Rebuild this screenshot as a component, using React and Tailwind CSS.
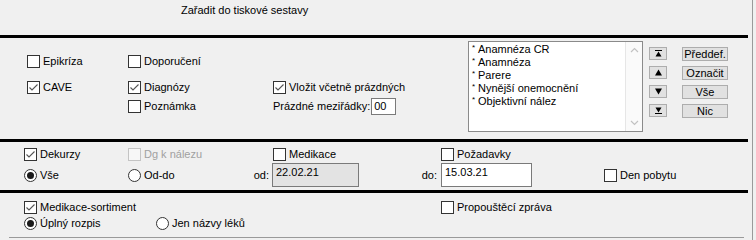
import React from "react";

function Check({ checked, disabled, label }) {
  return (
    <div className="flex items-center gap-[3px] h-[13px] whitespace-nowrap">
      <span
        className={
          disabled
            ? "w-[13px] h-[13px] shrink-0 border border-[#c4c4c4] bg-[#f7f7f7]"
            : "w-[13px] h-[13px] shrink-0 border border-[#333333] bg-white flex items-center justify-center"
        }
      >
        {checked && (
          <svg width="11" height="11" viewBox="0 0 11 11">
            <path d="M1.5 5.5 L4 8 L9.5 2.5" stroke="#555" strokeWidth="1.1" fill="none" />
          </svg>
        )}
      </span>
      <span className={disabled ? "text-[#a0a0a0] leading-[13px]" : "leading-[13px]"}>{label}</span>
    </div>
  );
}

function Radio({ checked, label }) {
  return (
    <div className="flex items-center gap-[3px] h-[13px] whitespace-nowrap">
      <span className="w-[13px] h-[13px] shrink-0 rounded-full border border-[#333333] bg-white flex items-center justify-center">
        {checked && <span className="w-[7px] h-[7px] rounded-full bg-[#1a1a1a]" />}
      </span>
      <span className="leading-[13px]">{label}</span>
    </div>
  );
}

function Btn({ children }) {
  return (
    <div className="w-[46px] h-[14px] border border-[#adadad] bg-[#e1e1e1] flex items-center justify-center leading-[12px]">
      {children}
    </div>
  );
}

function ArrowBtn({ kind }) {
  return (
    <div className="w-[18px] h-[13px] border border-[#adadad] bg-[#e1e1e1] flex items-center justify-center">
      <svg width="7" height="7" viewBox="0 0 7 7">
        {kind === "top" && (
          <>
            <rect x="0" y="0" width="7" height="1" fill="#000" />
            <path d="M0.5 6.5 L3.5 1.5 L6.5 6.5 Z" fill="#000" />
          </>
        )}
        {kind === "up" && <path d="M0 6.5 L3.5 0.5 L7 6.5 Z" fill="#000" />}
        {kind === "down" && <path d="M0 0.5 L3.5 6.5 L7 0.5 Z" fill="#000" />}
        {kind === "bottom" && (
          <>
            <path d="M0.5 0.5 L3.5 5.5 L6.5 0.5 Z" fill="#000" />
            <rect x="0" y="6" width="7" height="1" fill="#000" />
          </>
        )}
      </svg>
    </div>
  );
}

function Item({ children }) {
  return (
    <div className="flex items-start h-[13px] leading-[13px] whitespace-nowrap">
      <span className="text-[8px] leading-[9px] w-[6px]">*</span>
      <span>{children}</span>
    </div>
  );
}

export default function App() {
  return (
    <div className="w-[756px] h-[240px] bg-[#f0f0f0] flex overflow-hidden text-[11px] text-black font-['Liberation_Sans',Arial,sans-serif]">
      <div className="w-[752px] flex flex-col">
        {/* title */}
        <div className="h-[35px] pl-[181px] pt-[4px] leading-[13px]">Zařadit do tiskové sestavy</div>
        <div className="w-[748px] h-[3px] bg-black" />

        {/* section 1 */}
        <div className="h-[101px] flex">
          <div className="pl-[27px] pt-[17px] grid grid-cols-[101px_145px_195px] grid-rows-[26px_19px_13px]">
            <Check label="Epikríza" />
            <Check label="Doporučení" />
            <div />
            <Check checked label="CAVE" />
            <Check checked label="Diagnózy" />
            <Check checked label="Vložit včetně prázdných" />
            <div />
            <Check label="Poznámka" />
            <div className="flex items-center gap-[1px] h-[13px] whitespace-nowrap">
              <span className="leading-[13px]">Prázdné meziřádky:</span>
              <div className="w-[25px] h-[17px] shrink-0 border border-[#7a7a7a] bg-white pl-[2px] leading-[15px]">00</div>
            </div>
          </div>

          <div className="mt-[3px] w-[175px] h-[91px] border border-[#8a8a8a] bg-white flex">
            <div className="flex-1 pl-[3px] pt-[1px]">
              <Item>Anamnéza CR</Item>
              <Item>Anamnéza</Item>
              <Item>Parere</Item>
              <Item>Nynější onemocnění</Item>
              <Item>Objektivní nález</Item>
            </div>
            <div className="w-[17px] border-l border-[#e6e6e6] bg-[#fafafa] flex flex-col items-center justify-between py-[5px]">
              <svg width="9" height="6" viewBox="0 0 9 6">
                <path d="M1 5 L4.5 1.5 L8 5" stroke="#c2c2c2" strokeWidth="1.2" fill="none" />
              </svg>
              <svg width="9" height="6" viewBox="0 0 9 6">
                <path d="M1 1 L4.5 4.5 L8 1" stroke="#c2c2c2" strokeWidth="1.2" fill="none" />
              </svg>
            </div>
          </div>

          <div className="ml-[6px] mt-[9px] flex flex-col gap-[6px]">
            <ArrowBtn kind="top" />
            <ArrowBtn kind="up" />
            <ArrowBtn kind="down" />
            <ArrowBtn kind="bottom" />
          </div>
          <div className="ml-[15px] mt-[9px] flex flex-col gap-[5px]">
            <Btn>Předdef.</Btn>
            <Btn>Označit</Btn>
            <Btn>Vše</Btn>
            <Btn>Nic</Btn>
          </div>
        </div>
        <div className="w-[748px] h-[3px] bg-black" />

        {/* section 2 */}
        <div className="h-[48px] flex flex-col pl-[24px]">
          <div className="mt-[6px] flex h-[13px]">
            <div className="w-[104px]"><Check checked label="Dekurzy" /></div>
            <div className="w-[145px]"><Check disabled label="Dg k nálezu" /></div>
            <div className="w-[168px]"><Check label="Medikace" /></div>
            <Check label="Požadavky" />
          </div>
          <div className="mt-[2px] flex items-center h-[24px]">
            <div className="w-[104px]"><Radio checked label="Vše" /></div>
            <div className="w-[144px] flex items-center justify-between pr-[3px]">
              <Radio label="Od-do" />
              <span className="leading-[13px]">od:</span>
            </div>
            <div className="w-[87px] h-[24px] border border-[#7a7a7a] bg-[#e3e3e3] pl-[3px] pt-[2px] leading-[13px]">22.02.21</div>
            <div className="w-[82px] flex justify-end pr-[4px]"><span className="leading-[13px]">do:</span></div>
            <div className="w-[91px] h-[24px] border border-[#7a7a7a] bg-white pl-[3px] pt-[2px] leading-[13px]">15.03.21</div>
            <div className="ml-[72px]"><Check label="Den pobytu" /></div>
          </div>
        </div>
        <div className="w-[748px] h-[3px] bg-black" />

        {/* section 3 */}
        <div className="h-[44px] flex flex-col pl-[24px]">
          <div className="mt-[8px] flex h-[13px]">
            <div className="w-[417px]"><Check checked label="Medikace-sortiment" /></div>
            <Check label="Propouštěcí zpráva" />
          </div>
          <div className="mt-[3px] flex h-[13px]">
            <div className="w-[132px]"><Radio checked label="Úplný rozpis" /></div>
            <Radio label="Jen názvy léků" />
          </div>
        </div>
        <div className="ml-[9px] w-[735px] h-px bg-[#9a9a9a]" />
      </div>
      <div className="w-px h-full bg-[#9a9a9a]" />
    </div>
  );
}
